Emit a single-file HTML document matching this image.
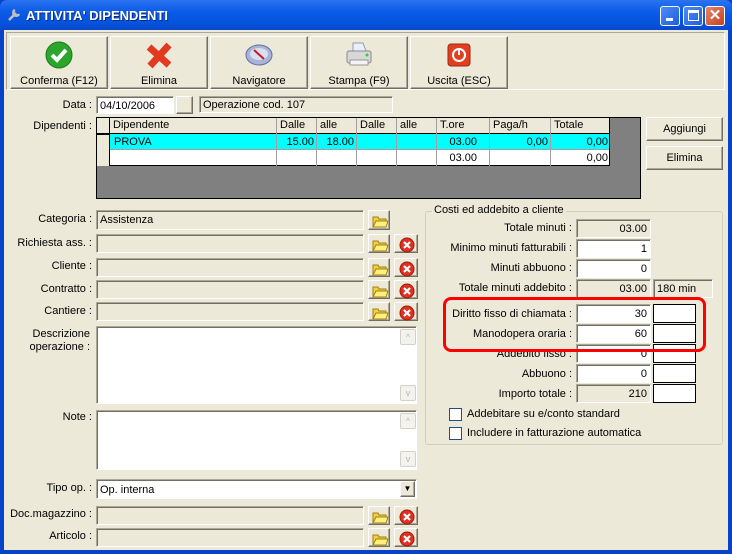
<!DOCTYPE html><html><head><style>
*{box-sizing:border-box}
body{margin:0;width:732px;height:554px;overflow:hidden;background:#0842C8;font-family:"Liberation Sans",sans-serif;font-size:11px;color:#000;position:relative}
.a{position:absolute}
#win{left:4px;top:30px;width:724px;height:520px;background:#ECE9D8}
.title{left:0;top:0;width:732px;height:30px;background:linear-gradient(#2B74F0,#0A5BE8 40%,#0552DC 80%,#0A48C8);border-radius:7px 7px 0 0}
.tb{width:20px;height:20px;border:1px solid #fff;border-radius:3px;background:linear-gradient(135deg,#4D8CF6,#1E5FE0)}
.btn{background:#ECE9D8;border:1px solid;border-color:#fff #716F64 #716F64 #fff;box-shadow:inset -1px -1px 0 #ACA899;text-align:center}
.fld{border:1px solid;border-color:#ACA899 #fff #fff #ACA899;box-shadow:inset 1px 1px 0 #716F64;background:#ECE9D8;height:19px;padding:3px 3px 0;line-height:13px;white-space:nowrap}
.w{background:#fff}
.lb{text-align:right;white-space:nowrap}
.r{text-align:right}
.cell{position:absolute;border-right:1px solid #A0A0A0;height:16px;padding:1px 3px;white-space:nowrap}
.sb{width:16px;height:16px;background:#F2F2EE;border:1px solid #D4D0C8;border-radius:2px;color:#B8B8B0;font-size:9px;text-align:center;line-height:14px}
</style></head><body>
<div class="a title"></div>
<svg class="a" style="left:6px;top:7px" width="16" height="16"><path d="M3 13 L10 6 M9 3 a3 3 0 1 0 4 4" stroke="#C0C0C0" stroke-width="2.5" fill="none"/></svg>
<div class="a" style="left:26px;top:8px;color:#fff;font-weight:bold;font-size:13px;text-shadow:1px 1px #0A2A80">ATTIVITA' DIPENDENTI</div>
<div class="a tb" style="left:660px;top:6px"><div class="a" style="left:5px;top:11px;width:7px;height:3px;background:#fff"></div></div>
<div class="a tb" style="left:683px;top:6px"><div class="a" style="left:4px;top:3px;width:11px;height:11px;border:1px solid #fff;border-top-width:3px"></div></div>
<div class="a tb" style="left:705px;top:6px;background:linear-gradient(135deg,#E8856A,#C8401E);color:#fff;font-weight:bold;font-size:15px;text-align:center;line-height:18px">✕</div>
<div class="a" id="win"></div>
<div class="a" style="left:6px;top:32px;width:719px;height:58px;border:1px solid;border-color:#ACA899 #fff #fff #ACA899"></div>
<div class="a btn" style="left:10px;top:36px;width:98px;height:53px;padding-top:38px">Conferma (F12)</div>
<svg class="a" style="left:44px;top:40px" width="30" height="30"><circle cx="15" cy="15" r="13" fill="#2BA52B" stroke="#1A7A1A"/><path d="M8 15 l5 5 l9 -10" stroke="#fff" stroke-width="4" fill="none"/></svg>
<div class="a btn" style="left:110px;top:36px;width:98px;height:53px;padding-top:38px">Elimina</div>
<svg class="a" style="left:144px;top:40px" width="30" height="30"><path d="M5 7 L25 25 M25 5 L6 26" stroke="#E03A20" stroke-width="7"/></svg>
<div class="a btn" style="left:210px;top:36px;width:98px;height:53px;padding-top:38px">Navigatore</div>
<svg class="a" style="left:244px;top:42px" width="30" height="26"><ellipse cx="15" cy="13" rx="13" ry="10" fill="#A8B4D8" stroke="#6070A0"/><ellipse cx="15" cy="12" rx="9" ry="6" fill="#D8E0F0"/><path d="M10 8 L20 17" stroke="#C02020" stroke-width="2"/></svg>
<div class="a btn" style="left:310px;top:36px;width:98px;height:53px;padding-top:38px">Stampa (F9)</div>
<svg class="a" style="left:344px;top:40px" width="30" height="30"><path d="M9 3 h10 l3 8 h-13z" fill="#E8F0FF" stroke="#99a"/><rect x="3" y="11" width="24" height="12" rx="2" fill="#D8D8D8" stroke="#888"/><rect x="6" y="20" width="18" height="5" fill="#F4F4F4" stroke="#999"/><circle cx="23" cy="15" r="1.5" fill="#3C3"/></svg>
<div class="a btn" style="left:410px;top:36px;width:98px;height:53px;padding-top:38px">Uscita (ESC)</div>
<svg class="a" style="left:447px;top:43px" width="24" height="24"><rect x="1" y="1" width="22" height="22" rx="3" fill="#E04020" stroke="#A02810"/><circle cx="12" cy="12" r="6" fill="none" stroke="#fff" stroke-width="2"/><path d="M12 5v7" stroke="#fff" stroke-width="2"/></svg>
<div class="a lb" style="left:20px;top:99px;width:72px">Data :</div>
<div class="a fld w" style="left:96px;top:96px;width:78px;height:18px">04/10/2006</div>
<div class="a btn" style="left:176px;top:96px;width:17px;height:18px"></div>
<div class="a fld" style="left:199px;top:96px;width:194px;height:17px;padding-top:2px">Operazione cod. 107</div>
<div class="a lb" style="left:10px;top:120px;width:82px">Dipendenti :</div>
<div class="a" style="left:96px;top:117px;width:545px;height:82px;background:#808080;border:1px solid #000"></div>
<div class="a" style="left:97px;top:118px;width:513px;height:16px;background:#ECE9D8;border-bottom:1px solid #000"></div>
<div class="a" style="left:97px;top:134px;width:513px;height:16px;background:#00FFFF;border-bottom:1px solid #A0A0A0"></div>
<div class="a" style="left:97px;top:150px;width:513px;height:16px;background:#fff;border-bottom:1px solid #000"></div>
<div class="a" style="left:97px;top:134px;width:13px;height:32px;background:#ECE9D8;border-top:1px solid #000"></div>
<div class="a" style="left:97px;top:118px;width:513px;height:48px;border-right:1px solid #000"></div>
<div class="cell" style="left:97px;top:118px;width:13px;height:48px;border-right:1px solid #000"></div>
<div class="cell" style="left:110px;top:118px;width:167px;height:48px">Dipendente</div>
<div class="cell" style="left:277px;top:118px;width:40px;height:48px">Dalle</div>
<div class="cell" style="left:317px;top:118px;width:40px;height:48px">alle</div>
<div class="cell" style="left:357px;top:118px;width:40px;height:48px">Dalle</div>
<div class="cell" style="left:397px;top:118px;width:40px;height:48px">alle</div>
<div class="cell" style="left:437px;top:118px;width:53px;height:48px">T.ore</div>
<div class="cell" style="left:490px;top:118px;width:61px;height:48px">Paga/h</div>
<div class="cell" style="left:551px;top:118px;width:59px;height:48px;border:0">Totale</div>
<div class="a" style="left:114px;top:136px">PROVA</div>
<div class="a r" style="left:277px;top:136px;width:37px">15.00</div>
<div class="a r" style="left:317px;top:136px;width:37px">18.00</div>
<div class="a r" style="left:437px;top:136px;width:40px">03.00</div>
<div class="a r" style="left:490px;top:136px;width:58px">0,00</div>
<div class="a r" style="left:551px;top:136px;width:57px">0,00</div>
<div class="a r" style="left:437px;top:152px;width:40px">03.00</div>
<div class="a r" style="left:551px;top:152px;width:57px">0,00</div>
<div class="a btn" style="left:646px;top:117px;width:77px;height:24px;padding-top:5px">Aggiungi</div>
<div class="a btn" style="left:646px;top:146px;width:77px;height:24px;padding-top:5px">Elimina</div>
<div class="a lb" style="left:0;top:213px;width:92px">Categoria :</div>
<div class="a fld" style="left:96px;top:210px;width:268px;height:20px">Assistenza</div>
<div class="a lb" style="left:0;top:237px;width:92px">Richiesta ass. :</div>
<div class="a fld" style="left:96px;top:234px;width:268px"></div>
<div class="a lb" style="left:0;top:260px;width:92px">Cliente :</div>
<div class="a fld" style="left:96px;top:258px;width:268px"></div>
<div class="a lb" style="left:0;top:283px;width:92px">Contratto :</div>
<div class="a fld" style="left:96px;top:280px;width:268px"></div>
<div class="a lb" style="left:0;top:305px;width:92px">Cantiere :</div>
<div class="a fld" style="left:96px;top:302px;width:268px"></div>
<div class="a lb" style="left:0;top:328px;width:90px;text-align:right;line-height:13px">Descrizione<br>operazione :</div>
<div class="a fld w" style="left:96px;top:326px;width:321px;height:78px"><div class="a sb" style="left:303px;top:2px">^</div><div class="a sb" style="left:303px;top:58px">v</div></div>
<div class="a lb" style="left:0;top:411px;width:92px">Note :</div>
<div class="a fld w" style="left:96px;top:410px;width:321px;height:60px"><div class="a sb" style="left:303px;top:2px">^</div><div class="a sb" style="left:303px;top:40px">v</div></div>
<div class="a lb" style="left:0;top:482px;width:92px">Tipo op. :</div>
<div class="a fld w" style="left:96px;top:479px;width:321px;height:20px;padding-top:4px">Op. interna<div class="a btn" style="left:303px;top:1px;width:15px;height:16px;font-size:8px;line-height:14px">▼</div></div>
<div class="a lb" style="left:0;top:508px;width:92px">Doc.magazzino :</div>
<div class="a fld" style="left:96px;top:506px;width:268px"></div>
<div class="a lb" style="left:0;top:530px;width:92px">Articolo :</div>
<div class="a fld" style="left:96px;top:528px;width:268px"></div>
<svg width="0" height="0" style="position:absolute"><defs>
<g id="fo"><path d="M4 6 h5 l1 2 h7 v8 h-13z" fill="#F0D040" stroke="#A08010"/><path d="M4 16 l3 -6 h12 l-2 6z" fill="#FFF080" stroke="#A08010"/></g>
<g id="xx"><circle cx="12" cy="10" r="7" fill="#E03020" stroke="#A01810"/><path d="M9 7 l6 6 M15 7 l-6 6" stroke="#fff" stroke-width="2.2"/></g></defs></svg>
<div class="a btn" style="left:368px;top:210px;width:22px;height:20px"><svg width="22" height="20"><use href="#fo"/></svg></div>
<div class="a btn" style="left:368px;top:234px;width:22px;height:19px"><svg width="22" height="20"><use href="#fo"/></svg></div>
<div class="a btn" style="left:394px;top:234px;width:24px;height:19px"><svg width="24" height="20"><use href="#xx"/></svg></div>
<div class="a btn" style="left:368px;top:258px;width:22px;height:19px"><svg width="22" height="20"><use href="#fo"/></svg></div>
<div class="a btn" style="left:394px;top:258px;width:24px;height:19px"><svg width="24" height="20"><use href="#xx"/></svg></div>
<div class="a btn" style="left:368px;top:280px;width:22px;height:19px"><svg width="22" height="20"><use href="#fo"/></svg></div>
<div class="a btn" style="left:394px;top:280px;width:24px;height:19px"><svg width="24" height="20"><use href="#xx"/></svg></div>
<div class="a btn" style="left:368px;top:302px;width:22px;height:19px"><svg width="22" height="20"><use href="#fo"/></svg></div>
<div class="a btn" style="left:394px;top:302px;width:24px;height:19px"><svg width="24" height="20"><use href="#xx"/></svg></div>
<div class="a btn" style="left:368px;top:506px;width:22px;height:19px"><svg width="22" height="20"><use href="#fo"/></svg></div>
<div class="a btn" style="left:394px;top:506px;width:24px;height:19px"><svg width="24" height="20"><use href="#xx"/></svg></div>
<div class="a btn" style="left:368px;top:528px;width:22px;height:19px"><svg width="22" height="20"><use href="#fo"/></svg></div>
<div class="a btn" style="left:394px;top:528px;width:24px;height:19px"><svg width="24" height="20"><use href="#xx"/></svg></div>
<div class="a" style="left:425px;top:211px;width:298px;height:234px;border:1px solid #D0D0BF;border-radius:3px"></div>
<div class="a" style="left:432px;top:204px;background:#ECE9D8;padding:0 2px">Costi ed addebito a cliente</div>
<div class="a lb" style="left:430px;top:222px;width:142px">Totale minuti :</div>
<div class="a fld r" style="left:576px;top:219px;width:75px">03.00</div>
<div class="a lb" style="left:430px;top:242px;width:142px">Minimo minuti fatturabili :</div>
<div class="a fld w r" style="left:576px;top:239px;width:75px">1</div>
<div class="a lb" style="left:430px;top:262px;width:142px">Minuti abbuono :</div>
<div class="a fld w r" style="left:576px;top:259px;width:75px">0</div>
<div class="a lb" style="left:430px;top:282px;width:142px">Totale minuti addebito :</div>
<div class="a fld r" style="left:576px;top:279px;width:75px">03.00</div>
<div class="a fld" style="left:653px;top:279px;width:60px">180 min</div>
<div class="a lb" style="left:430px;top:308px;width:142px">Diritto fisso di chiamata :</div>
<div class="a fld w r" style="left:576px;top:304px;width:75px">30</div>
<div class="a lb" style="left:430px;top:328px;width:142px">Manodopera oraria :</div>
<div class="a fld w r" style="left:576px;top:324px;width:75px">60</div>
<div class="a lb" style="left:430px;top:348px;width:142px">Addebito fisso :</div>
<div class="a fld w r" style="left:576px;top:344px;width:75px">0</div>
<div class="a lb" style="left:430px;top:368px;width:142px">Abbuono :</div>
<div class="a fld w r" style="left:576px;top:364px;width:75px">0</div>
<div class="a lb" style="left:430px;top:388px;width:142px">Importo totale :</div>
<div class="a fld r" style="left:576px;top:384px;width:75px">210</div>
<div class="a" style="left:653px;top:304px;width:43px;height:19px;border:1px solid #000;background:#fff"></div>
<div class="a" style="left:653px;top:324px;width:43px;height:19px;border:1px solid #000;background:#fff"></div>
<div class="a" style="left:653px;top:344px;width:43px;height:19px;border:1px solid #000;background:#fff"></div>
<div class="a" style="left:653px;top:364px;width:43px;height:19px;border:1px solid #000;background:#fff"></div>
<div class="a" style="left:653px;top:384px;width:43px;height:19px;border:1px solid #000;background:#fff"></div>
<div class="a" style="left:443px;top:297px;width:263px;height:55px;border:3px solid #F00;border-radius:8px"></div>
<div class="a" style="left:449px;top:408px;width:13px;height:13px;border:1px solid #1C5180;background:#fff"></div>
<div class="a" style="left:467px;top:408px">Addebitare su e/conto standard</div>
<div class="a" style="left:449px;top:427px;width:13px;height:13px;border:1px solid #1C5180;background:#fff"></div>
<div class="a" style="left:467px;top:427px">Includere in fatturazione automatica</div>
</body></html>
